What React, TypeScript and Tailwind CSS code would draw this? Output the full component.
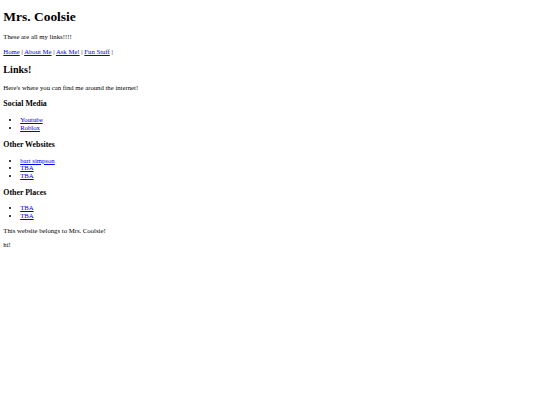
const serif = { fontFamily: '"Liberation Serif", "Times New Roman", serif' };

function A({ children }: { children: React.ReactNode }) {
  return (
    <a href="#" className="text-[#0000ee] underline">
      {children}
    </a>
  );
}

function LinkList({ items }: { items: string[] }) {
  return (
    <ul className="my-[6.72px] list-disc pl-[16.8px]">
      {items.map((t, i) => (
        <li key={i}>
          <A>{t}</A>
        </li>
      ))}
    </ul>
  );
}

export default function App() {
  return (
    <div
      className="min-h-[405px] bg-white px-[3.36px] pt-[9px] pb-2 text-[6.72px] leading-[1.15] text-black"
      style={serif}
    >
      <h1 className="mt-0 mb-[9px] text-[13.44px] leading-[1.15] font-bold">Mrs. Coolsie</h1>
      <p className="my-[6.72px]">These are all my links!!!!</p>
      <p className="my-[6.72px]">
        <A>Home</A> | <A>About Me</A> | <A>Ask Me!</A> | <A>Fun Stuff</A> |
      </p>
      <h2 className="my-[8.37px] text-[10.08px] leading-[1.15] font-bold">Links!</h2>
      <p className="my-[6.72px]">Here's where you can find me around the internet!</p>
      <h3 className="my-[7.86px] text-[7.86px] leading-[1.15] font-bold">Social Media</h3>
      <LinkList items={["Youtube", "Roblox"]} />
      <h3 className="my-[7.86px] text-[7.86px] leading-[1.15] font-bold">Other Websites</h3>
      <LinkList items={["bart simpson", "TBA", "TBA"]} />
      <h3 className="my-[7.86px] text-[7.86px] leading-[1.15] font-bold">Other Places</h3>
      <LinkList items={["TBA", "TBA"]} />
      <p className="my-[6.72px]">This website belongs to Mrs. Coolsie!</p>
      <p className="my-[6.72px]">hi!</p>
    </div>
  );
}
